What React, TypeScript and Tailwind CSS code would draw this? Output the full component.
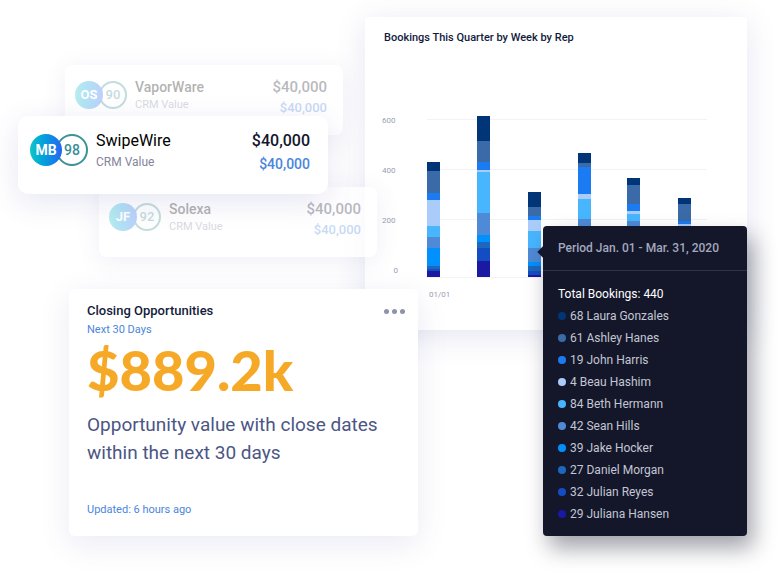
import React from "react";
import { clsx } from "clsx";

type Rep = { name: string; bookings: number; dot: string };

const reps: Rep[] = [
  { name: "Laura Gonzales", bookings: 68, dot: "bg-[#003678]" },
  { name: "Ashley Hanes", bookings: 61, dot: "bg-[#3a6ba8]" },
  { name: "John Harris", bookings: 19, dot: "bg-[#1b7bf2]" },
  { name: "Beau Hashim", bookings: 4, dot: "bg-[#a9ccfb]" },
  { name: "Beth Hermann", bookings: 84, dot: "bg-[#47b6ff]" },
  { name: "Sean Hills", bookings: 42, dot: "bg-[#4f8ad6]" },
  { name: "Jake Hocker", bookings: 39, dot: "bg-[#0091ff]" },
  { name: "Daniel Morgan", bookings: 27, dot: "bg-[#1d67bd]" },
  { name: "Julian Reyes", bookings: 32, dot: "bg-[#144cc4]" },
  { name: "Juliana Hansen", bookings: 29, dot: "bg-[#1a19a4]" },
];

const segmentColors = [
  "#003678", "#3a6ba8", "#1b7bf2", "#a9ccfb", "#47b6ff",
  "#4f8ad6", "#0091ff", "#1d67bd", "#144cc4", "#1a19a4",
];

// Segment heights from the top of each bar down, one per rep.
const weeks = [
  { x: 0, segments: [9, 22, 7, 26, 11, 11, 18, 3, 2, 6] },
  { x: 50, segments: [25, 21, 8, 2, 41, 22, 7, 6, 13, 16] },
  { x: 101, segments: [15, 9, 4, 11, 17, 14, 4, 5, 4, 2] },
  { x: 151, segments: [10, 4, 27, 5, 20, 22, 10, 8, 10, 8] },
  { x: 200, segments: [7, 19, 7, 3, 7, 20, 10, 8, 10, 8] },
  { x: 251, segments: [6, 17, 3, 3, 7, 15, 8, 6, 8, 6] },
];

const BASELINE = 167;

function BookingsPlot() {
  return (
    <svg viewBox="0 0 280 168" className="w-full" role="img" aria-label="Bookings by week">
      {[9, 59, 109, 167].map((y) => (
        <rect key={y} x="0" y={y} width="280" height="1" fill="#f3f3f6" />
      ))}
      {weeks.map((week) => {
        let y = BASELINE - week.segments.reduce((a, b) => a + b, 0);
        return (
          <g key={week.x}>
            {week.segments.map((height, i) => {
              const top = y;
              y += height;
              return <rect key={i} x={week.x} y={top} width="13" height={height} fill={segmentColors[i]} />;
            })}
          </g>
        );
      })}
    </svg>
  );
}

type AccountProps = {
  initials: string;
  score: number;
  name: string;
  className: string;
  active?: boolean;
};

function AccountCard({ initials, score, name, className, active = false }: AccountProps) {
  return (
    <article
      className={clsx(
        "flex items-center",
        active
          ? "relative z-10 h-[78px] rounded-[10px] bg-white pr-[18px] pl-3 shadow-[0_8px_30px_rgba(80,80,170,0.14)]"
          : "h-[70px] rounded-lg bg-white/75 pr-4 pl-[10px] shadow-[0_4px_24px_rgba(80,80,170,0.09)]",
        className,
      )}
    >
      <div className={clsx("flex w-full items-start pb-1", !active && "opacity-30")}>
        <div className="flex items-center pt-1">
          <span
            className={clsx(
              "z-10 flex items-center justify-center rounded-full bg-linear-to-r from-[#12c6c6] to-[#2563f2] font-bold text-white",
              active ? "size-8 text-sm" : "size-7 text-[13px]",
            )}
          >
            {initials}
          </span>
          <span
            className={clsx(
              "flex items-center justify-center rounded-full border-2 border-[#3c9295] font-medium text-[#3c8f95]",
              active ? "-ml-[6px] size-8 text-sm" : "-ml-1 size-7 text-[13px]",
            )}
          >
            {score}
          </span>
        </div>
        <div className="flex-1 pl-2">
          <h3 className={clsx("text-black", active ? "text-base leading-[22px]" : "text-sm leading-5 font-medium")}>{name}</h3>
          <p className={clsx("text-[#84849c]", active ? "text-xs leading-5" : "text-[11px] leading-4")}>CRM Value</p>
        </div>
        <div className="text-right font-medium">
          <p className={clsx("text-[#14162b]", active ? "text-base leading-[22px]" : "text-[15px] leading-5")}>$40,000</p>
          <p className={clsx("text-[#4a86dc]", active ? "text-sm leading-6" : "text-[13px] leading-[22px]")}>$40,000</p>
        </div>
      </div>
    </article>
  );
}

function ClosingCard() {
  return (
    <article className="mt-8 ml-[69px] w-[349px] rounded-md bg-white px-[18px] pt-[13px] pb-4 shadow-[0_8px_30px_rgba(80,80,170,0.12)]">
      <header className="flex items-center justify-between">
        <h2 className="text-[13px] leading-[18px] font-medium text-[#131b3d]">Closing Opportunities</h2>
        <button type="button" aria-label="More options" className="-mr-[5px] flex gap-[3px]">
          <span className="size-[5px] rounded-full bg-[#8e93aa]" />
          <span className="size-[5px] rounded-full bg-[#8e93aa]" />
          <span className="size-[5px] rounded-full bg-[#8e93aa]" />
        </button>
      </header>
      <p className="text-[11px] leading-5 text-[#4a86dc]">Next 30 Days</p>
      <p className="font-[Lato,sans-serif] text-[56px] leading-[60px] font-black text-[#f5a926]">$889.2k</p>
      <p className="pt-[11px] text-[19px] leading-7 text-[#4b5685]">
        Opportunity value with close dates within the next 30 days
      </p>
      <p className="pt-[33px] text-[11px] leading-5 text-[#4a86dc]">Updated: 6 hours ago</p>
    </article>
  );
}

function PeriodTooltip() {
  return (
    <aside className="absolute top-[209px] right-0 w-[204px] rounded bg-[#14172a] shadow-[6px_12px_22px_rgba(20,22,42,0.4)]">
      <span className="absolute top-[22px] -left-1 size-2 rotate-45 bg-[#14172a]" />
      <h3 className="border-b border-[#303346] px-[15px] py-3 text-xs leading-5 font-medium text-[#a3a8be]">
        Period Jan. 01 - Mar. 31, 2020
      </h3>
      <div className="px-[15px] pt-3 pb-[11px]">
        <p className="text-xs leading-[22px] text-white">Total Bookings: 440</p>
        <ul>
          {reps.map((rep) => (
            <li key={rep.name} className="flex items-center gap-1 text-xs leading-[22px] text-[#c3c6d3]">
              <span className={clsx("size-2 rounded-full", rep.dot)} />
              {rep.bookings} {rep.name}
            </li>
          ))}
        </ul>
      </div>
    </aside>
  );
}

function BookingsCard() {
  return (
    <article className="relative h-[313px] rounded bg-white pt-[11px] pr-10 pl-[17px] shadow-[0_6px_30px_rgba(80,80,170,0.15)]">
      <h2 className="pl-[2px] text-[11px] leading-5 font-medium text-[#131b3d]">Bookings This Quarter by Week by Rep</h2>
      <div className="flex pt-[62px]">
        <div className="flex w-[45px] flex-col gap-10 pt-[6px] text-[8px] leading-[10px] text-[#9a9eb4]">
          <span>600</span>
          <span>400</span>
          <span>200</span>
          <span className="w-4 text-right">0</span>
        </div>
        <div className="flex-1">
          <BookingsPlot />
          <p className="pt-3 pl-[2px] text-[8px] leading-[10px] text-[#9a9eb4]">01/01</p>
        </div>
      </div>
      <PeriodTooltip />
    </article>
  );
}

export default function App() {
  return (
    <main className="grid min-h-screen grid-cols-[365px_minmax(0,1fr)] overflow-hidden bg-white font-[Roboto,sans-serif]">
      <section className="relative z-10 pt-[65px]" aria-label="Opportunities">
        <AccountCard initials="OS" score={90} name="VaporWare" className="ml-[65px] w-[278px]" />
        <AccountCard initials="MB" score={98} name="SwipeWire" active className="-mt-[19px] ml-[18px] w-[310px]" />
        <AccountCard initials="JF" score={92} name="Solexa" className="-mt-[7px] ml-[99px] w-[278px]" />
        <ClosingCard />
      </section>
      <section className="pt-[17px] pr-[33px]" aria-label="Bookings">
        <BookingsCard />
      </section>
    </main>
  );
}
